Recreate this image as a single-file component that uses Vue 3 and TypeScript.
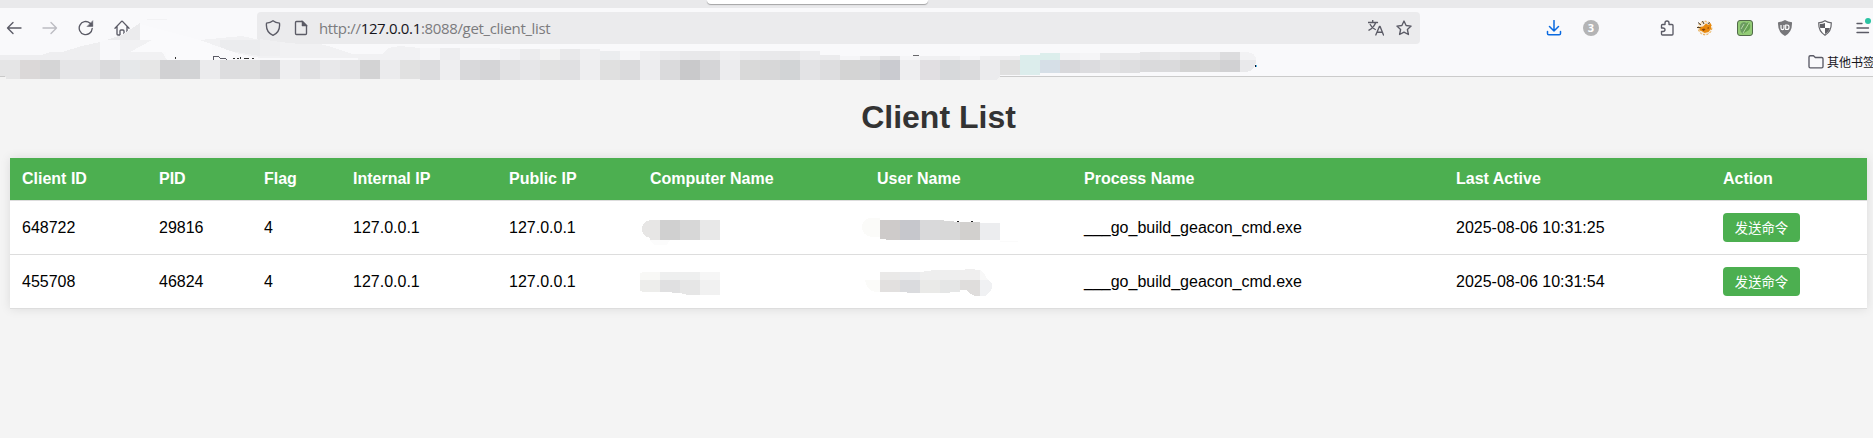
<script setup lang="ts">
interface Client {
  id: string
  pid: string
  flag: string
  internalIp: string
  publicIp: string
  process: string
  lastActive: string
}

interface Tile {
  x: number
  y: number
  w: number
  h: number
  c: string
}

const headers: string[] = [
  'Client ID', 'PID', 'Flag', 'Internal IP', 'Public IP',
  'Computer Name', 'User Name', 'Process Name', 'Last Active', 'Action',
]

const clients: Client[] = [
  { id: '648722', pid: '29816', flag: '4', internalIp: '127.0.0.1', publicIp: '127.0.0.1', process: '___go_build_geacon_cmd.exe', lastActive: '2025-08-06 10:31:25' },
  { id: '455708', pid: '46824', flag: '4', internalIp: '127.0.0.1', publicIp: '127.0.0.1', process: '___go_build_geacon_cmd.exe', lastActive: '2025-08-06 10:31:54' },
]

const strip = (colors: string, x: number, y: number, h: number): Tile[] =>
  colors.split(' ').map((c, i) => ({ x: x + i * 20, y, w: 20, h, c: '#' + c }))

const lowerTiles: Tile[] = [
  ...strip('e5e5e6 dbd8d8 d5d5d6 e5e5e7 e5e5e7 dadadc e6e8ea e6e6e6 d1d1d3 d2d3d5 ebebed dddddf dededf d5d5d7 eeeef0 e0e0e2 e8e8ea e4e4e6 d3d3d4 ebebed e1e1e1', 0, 60, 19),
  ...strip('dcdcde eeeef0 d9d9db d5d5d7 e1e1e3 e6e6e8 e1e1e1 e0e0e2 eeeef0 e0e0e0 dadadc ededef dadadc c9c9cb d5d5d7 ececee d9d9d9 d7d7d8 d2d4d6 e3e3e5 dddddf d4d4d4 d3d4d6 cacbd0 eeeef0 e1dfe2 d7d9db dadadc ebebed', 420, 60, 20),
  ...strip('e0e0e0 dcedec', 1000, 60, 15),
  ...strip('d6dfe7 d8d8db dcdcdf e1e1e3 dedee0', 1040, 60, 13),
  ...strip('dadadc dadadc d3d3d3 d5d5d5 d1d1d3', 1140, 60, 12),
]

const upperTiles: Tile[] = [
  ...strip('f5f5f7 ededef f4f4f6 f4f4f6', 420, 48, 12),
  ...strip('f1f1f3 ebebed f2f2f2 e8e8ea efeff1', 500, 49, 11),
  ...strip('ebedef f5f5f7 eeeef0 ebebed e8e8ea e7e7e9 eeeef0 ebebed e9e9eb e7e7e9 ededef', 600, 51, 9),
  ...strip('ebebed', 820, 55, 5),
  ...strip('f5f5f7 ebebed e2e2e4 f5f5f7 f0f0f2 efeff1 f5f5f7 eeeef0 eeeef0', 840, 56, 4),
  ...strip('dceeec', 1020, 55, 5),
  ...strip('dceeec f3f3f5 f5f5f7 e9e9eb eaeaec', 1040, 53, 7),
  ...strip('e6e6e8 e9e9eb e6e6e8 e8e8ea dcdcde', 1140, 52, 8),
]
</script>

<template>
  <div class="window">
    <div class="tabstrip"><div class="tab"></div></div>

    <header class="chrome">
      <div class="toolbar">
        <nav class="nav">
          <svg class="ico" viewBox="0 0 16 16"><path d="M15 8H1.500M7 2.500 1.500 8 7 13.500" /></svg>
          <svg class="ico dim" viewBox="0 0 16 16"><path d="M1 8h13.500M9 2.500 14.500 8 9 13.500" /></svg>
          <svg class="ico" viewBox="0 0 16 16"><path d="M14.200 8.500A6.500 6.500 0 1 1 11.800 3L14 5.300" /><path class="solid" d="M14.800 1v5.500H9.300Z" /></svg>
          <svg class="ico" viewBox="0 0 16 16"><path d="M1 8.200 7.300 1.600q.7-.6 1.400 0L15 8.200M3 6.500V14q0 1 1 1h2v-4q0-1 1-1h2q1 0 1 1v4h2q1 0 1-1V6.500" /></svg>
        </nav>

        <div class="urlbar">
          <svg class="ico shield" viewBox="0 0 16 16"><path d="M8 .8C10 2.400 12.500 3 14.500 3.200 15 8 13.500 13 8 15.300 2.500 13 1 8 1.500 3.200 3.500 3 6 2.400 8 .8Z" /></svg>
          <svg class="ico page" viewBox="0 0 16 16"><path d="M3.500 1.500h6l4 4v8q0 1-1 1h-9q-1 0-1-1v-11q0-1 1-1Z" /><path class="solid" d="M9 1v5h5Z" /></svg>
          <span class="url">http://<b>127.0.0.1</b>:8088/get_client_list</span>
          <svg class="ico translate" viewBox="0 0 16 16"><path d="M0 2.500h9.500M4.700.3v2M7.700 2.500Q6 7.500 1 10.200M2.200 4.500Q3.800 8 7.300 9.500M7.800 15 11.500 6.300h.5L15.500 15M9 12.200h5.500" /></svg>
          <svg class="ico star" viewBox="0 0 16 16"><path d="m8 1 2.100 4.500 5 .6-3.700 3.400 1 5L8 12.100l-4.400 2.400 1-5L.9 6.100l5-.6Z" /></svg>
        </div>

        <div class="actions">
          <svg class="ico download" viewBox="0 0 16 16"><path d="M8 .5v10.500M3.500 6.500 8 11l4.500-4.500M1.500 11.500v2q0 1.300 1.300 1.300h10.400q1.300 0 1.300-1.300v-2" /></svg>
          <span class="count">3</span>
          <svg class="ico puzzle" viewBox="0 0 16 16"><path d="M6 4.500V3Q6 1 8 1t2 2v1.500h3q1 0 1 1V14q0 1-1 1H3.500q-1 0-1-1v-2.500H4q2 0 2-1.700T4 8H2.500V5.500q0-1 1-1Z" /></svg>
          <svg class="art fox" viewBox="0 0 16 16">
            <circle cx="8" cy="8" r="6.800" fill="#f6ead8" stroke="#e6a23c" stroke-width="1" stroke-dasharray="2 1.500" />
            <path d="M2.500 7 6 6.500l3-3 2.500 1.500L14 3v6l-2.500 3-4 1-3-2-2-.5Z" fill="#e8890f" />
            <path d="M1 2.500 4 5M5.500 1l1.500 3M0 7.500h3.500M11 4l2-1.500" stroke="#4b3b26" stroke-width="1" />
            <path d="m4.500 9.500 2.500-1 1.500 1-2 1.500ZM10 8l2-1-.5 2Z" fill="#864208" />
            <path d="M9 2.500h3l-1.500 1.500Z" fill="#c9cbd0" />
          </svg>
          <svg class="art" viewBox="0 0 16 16">
            <rect x=".5" y=".5" width="15" height="15" rx="2.500" fill="#93cb76" stroke="#526a4a" />
            <path d="M3 9Q2 3 7 2l3 1-4 11-2-2Z" fill="#6b9a62" /><path d="M7 13Q5 7 11 2q4 3 1 8Z" fill="#65a052" /><path d="M6 13 12 3M4 9l3-5" stroke="#b4d5a3" fill="none" />
          </svg>
          <svg class="art" viewBox="0 0 16 16"><path d="M8 0q3 2 7 2.300Q15.500 12 8 16 .5 12 1 2.300 5 2 8 0Z" fill="#77777a" /><path d="M4 5v3q0 1.700 1.500 1.700T7 8V5M8.700 5v4.500h1.200Q12 9.500 12 7.200T9.900 5Z" fill="none" stroke="#fff" stroke-width="1.200" /></svg>
          <svg class="art" viewBox="0 0 16 16"><path d="M8 .8Q10.500 2.500 14.300 2.800 14.500 11.500 8 15.200 1.500 11.500 1.700 2.800 5.500 2.500 8 .8Z" fill="#fff" stroke="#66666b" stroke-width="1.200" /><path d="M8 3v5H3.200Q2.800 6 2.900 4 6 4 8 3ZM8 8h4.800Q11.800 12 8 14Z" fill="#606065" /></svg>
          <div class="menu">
            <svg class="ico" viewBox="0 0 16 16"><path d="M2 3.500h5M2 8h11.500M2 12.500h11.500" /></svg>
            <i class="dot"></i>
          </div>
        </div>
      </div>

      <div class="bookmarks">
        <svg class="ico" viewBox="0 0 16 16"><path d="M1 12.500V3q0-1.300 1.300-1.300h3.200L7.300 3.500h6.400Q15 3.500 15 4.800v7.700q0 1.300-1.300 1.300H2.300Q1 13.800 1 12.500Z" /></svg>
        <span>其他书签</span>
      </div>

      <svg class="mosaic" viewBox="0 0 1260 80" shape-rendering="crispEdges">
        <path d="M147 19h20v1h-20Z" fill="#f2f2f4" />
        <path d="M140 24v16h13l-23 12h36v8h46V40h-12Z" fill="#fafafc" />
        <path d="M0 55h42l8-3h12l20-6 18-4v18H0Z" fill="#eeeef0" />
        <path d="M100 42l6-2h14v20h-20Z" fill="#f8f8fa" />
        <path d="m106 40 16-5 18-12v17Z" fill="#ebebed" />
        <path d="M120 40h32l-22 12h32l5 8h-47Z" fill="#f1f1f3" />
        <path d="m200 40 42-4 18 4 40 4h20l12 3 20 7h30l6-6 12-2 20 2v12h-62v-2h-98l-24-5Z" fill="#f1f1f3" />
        <path d="M220 40h40v16l-30-5-10-4Z" fill="#ebecee" />
        <path d="M260 39v17h20V42Z" fill="#efeff1" />
        <path d="M213 60v-3q0-1 1-1h4l2 2h5l2 2" fill="none" stroke="#5b5b66" stroke-width="1" />
        <path d="M175 57v2M233 58h2M237 58h2M240 57v2M244 58h5M252 58h2" stroke="#333" stroke-width="1" />
        <rect v-for="(t, i) in upperTiles" :key="'u' + i" :x="t.x" :y="t.y" :width="t.w" :height="t.h" :fill="t.c" />
        <rect v-for="(t, i) in lowerTiles" :key="'l' + i" :x="t.x" :y="t.y" :width="t.w" :height="t.h" :fill="t.c" />
        <path d="M1240 52h7q9 1 9 8h-16Z" fill="#f2f2f4" />
        <path d="M1240 60h16q0 10-9 12h-7Z" fill="#e9e9eb" />
        <path d="M0 76h5l2 4H0ZM1000 76v4h-3Z" fill="#f3f3f3" />
        <path d="M0 76h5v1H0Z" fill="#c9c9c9" />
        <path d="M913 55h6v1h-6Z" fill="#68686b" />
        <path d="M1255 65h1v2h-1Z" fill="#112" />
        <path d="M1256 65h1v2h-1Z" fill="#4cbcf0" />
      </svg>
    </header>

    <main>
      <h1>Client List</h1>
      <table>
        <colgroup><col v-for="(h, i) in headers" :key="h" :class="'c' + i" /></colgroup>
        <thead>
          <tr><th v-for="h in headers" :key="h">{{ h }}</th></tr>
        </thead>
        <tbody>
          <tr v-for="(c, i) in clients" :key="c.id">
            <td>{{ c.id }}</td>
            <td>{{ c.pid }}</td>
            <td>{{ c.flag }}</td>
            <td>{{ c.internalIp }}</td>
            <td>{{ c.publicIp }}</td>
            <td>
              <svg v-if="i === 0" class="veil" width="100" height="30" viewBox="640 215 100 30" shape-rendering="crispEdges">
                <path d="M650 240h20l-4 6h-11Z" fill="#fcfcfc" />
                <path d="M660 220h-10q-8 2-8 9 0 7 8 9v2h10Z" fill="#e7e6e5" />
                <path d="M660 220h20v20h-20Z" fill="#d0d0d0" /><path d="M680 220h20v20h-20Z" fill="#d7d7d7" /><path d="M700 220h20v20h-20Z" fill="#e8e8e8" />
              </svg>
              <svg v-else class="veil" width="100" height="30" viewBox="640 269 100 30" shape-rendering="crispEdges">
                <path d="M640 273l3-1h17v8h-20Z" fill="#f8f8f6" /><path d="M640 280h20v12h-17l-3-1Z" fill="#ededeb" />
                <path d="M660 272h40v8h-40Z" fill="#eeefef" /><path d="M700 272h20v8h-20Z" fill="#f6f6f6" />
                <path d="M660 280h20v13l-17-1h-3Z" fill="#e0e0e1" /><path d="M680 280h20v15h-12l-8-2Z" fill="#e6e6e6" /><path d="M700 280h20v15h-20Z" fill="#f1f1f1" />
              </svg>
            </td>
            <td>
              <svg v-if="i === 0" class="veil user" width="160" height="30" viewBox="860 215 160 30" shape-rendering="crispEdges">
                <path d="M880 218h-11q-7 3-7 9 0 8 9 10h9Z" fill="#fbfbf9" />
                <path d="M880 220h20v20h-14v-1h-6Z" fill="#cecbca" /><path d="M900 220h20v20h-20Z" fill="#c6c7cc" /><path d="M920 220h20v20h-20Z" fill="#d9d9da" />
                <path d="M940 220l8 1 12 1v18h-20Z" fill="#d8d8d8" /><path d="M960 222h20v18h-20Z" fill="#d2d0ce" /><path d="M980 223h20v17h-20Z" fill="#ecedef" />
                <path d="M957 221h2v1h-2ZM971 221h2v1h-2Z" fill="#222" /><path d="M1000 241h18v1h-18Z" fill="#fbfbfb" />
              </svg>
              <svg v-else class="veil user" width="160" height="30" viewBox="860 269 160 30" shape-rendering="crispEdges">
                <path d="M880 280h-15q1 10 10 12h5Z" fill="#fbfbf9" />
                <path d="M880 272h20v8h-20Z" fill="#eae9e8" /><path d="M900 272h20v8h-20Z" fill="#e9eaec" /><path d="M920 272l15-2h25v10h-40Z" fill="#eeeeee" />
                <path d="M960 270l10-1 10 1v10h-20Z" fill="#efeeee" /><path d="M980 270l5 5 3 5h-8Z" fill="#f8f8f8" />
                <path d="M880 280h20v12h-20Z" fill="#e2e0df" /><path d="M900 280h20v13h-12l-2-1h-6Z" fill="#dadbde" /><path d="M920 280h20v13h-20Z" fill="#eaeae8" /><path d="M940 280h20v12l-20 1Z" fill="#e5e6e6" />
                <path d="M960 280h20v16h-5q-6-2-8-6h-7Z" fill="#dfdddc" /><path d="M980 280h9q5 4 2 10l-5 6h-6Z" fill="#f0f1f3" />
              </svg>
            </td>
            <td>{{ c.process }}</td>
            <td>{{ c.lastActive }}</td>
            <td><button type="button">发送命令</button></td>
          </tr>
        </tbody>
      </table>
    </main>
  </div>
</template>

<style>
body {
  margin: 0;
  background: #f4f4f4;
}
</style>

<style scoped>
.window {
  width: 1873px;
  height: 438px;
  overflow: hidden;
  background: #f4f4f4;
  font-family: "Liberation Sans", Arial, "Noto Sans CJK SC", sans-serif;
  color: #000;
}
.tabstrip {
  height: 8px;
  background: #e9e9eb;
}
.tab {
  width: 221px;
  height: 4px;
  margin-left: 707px;
  background: #fff;
  border-radius: 0 0 4px 4px;
  box-shadow: 0 1px 1px rgba(0, 0, 0, 0.3);
}
.chrome {
  position: relative;
  box-sizing: border-box;
  height: 69px;
  background: #f9f9fb;
  border-bottom: 1px solid #cbcbcb;
}
.toolbar {
  display: flex;
  align-items: center;
  height: 40px;
}
.nav {
  display: flex;
  flex: none;
  gap: 20px;
  width: 251px;
  padding-left: 6px;
}
.ico {
  display: block;
  flex: none;
  width: 16px;
  height: 16px;
  fill: none;
  stroke: #5b5b66;
  stroke-width: 1.35;
  stroke-linecap: round;
  stroke-linejoin: round;
}
.ico .solid {
  fill: #5b5b66;
  stroke-width: 0.5;
}
.dim {
  stroke: #bcbcc2;
}
.urlbar {
  display: flex;
  flex: none;
  align-items: center;
  box-sizing: border-box;
  width: 1163px;
  height: 32px;
  padding: 0 8px;
  background: #ebebed;
  border-radius: 4px;
}
.page {
  margin-left: 12px;
}
.url {
  flex: 1;
  margin-left: 10px;
  font: 15px/30px "Open Sans", "Noto Sans", sans-serif;
  letter-spacing: -0.34px;
  color: #7b7b7e;
  white-space: nowrap;
}
.url b {
  font-weight: 400;
  color: #15141a;
}
.star {
  margin-left: 12px;
}
.actions {
  display: flex;
  flex: none;
  align-items: center;
  padding-left: 126px;
}
.download {
  stroke: #0a6ae0;
  stroke-width: 1.5;
}
.count {
  width: 16px;
  height: 16px;
  margin: 0 60px 0 21px;
  border-radius: 50%;
  background: #b4b4b5;
  color: #fff;
  font: bold 11px/16px "Open Sans", sans-serif;
  text-align: center;
}
.art {
  display: block;
  flex: none;
  width: 16px;
  height: 16px;
  margin-left: 24px;
}
.fox {
  margin-left: 22px;
}
.menu {
  position: relative;
  margin-left: 22px;
}
.dot {
  position: absolute;
  left: 10px;
  top: -2px;
  width: 6px;
  height: 6px;
  border-radius: 50%;
  background: #2ac3a2;
}
.bookmarks {
  display: flex;
  align-items: center;
  gap: 3px;
  height: 28px;
  padding-left: 1808px;
  font: 12px/18px "Noto Sans CJK SC", sans-serif;
  color: #15141a;
  white-space: nowrap;
}
.mosaic {
  position: absolute;
  left: 0;
  top: -8px;
  width: 1260px;
  height: 80px;
}
main {
  padding: 22px 6px 0 10px;
}
h1 {
  margin: 0 0 22px;
  font-size: 32px;
  line-height: 37px;
  text-align: center;
  color: #333;
}
table {
  width: 1857px;
  table-layout: fixed;
  border-collapse: separate;
  border-spacing: 0;
  background: #fff;
  box-shadow: 0 0 10px rgba(0, 0, 0, 0.1);
}
.c0 { width: 137px; }
.c1 { width: 105px; }
.c2 { width: 89px; }
.c3 { width: 156px; }
.c4 { width: 141px; }
.c5 { width: 227px; }
.c6 { width: 207px; }
.c7 { width: 372px; }
.c8 { width: 267px; }
.c9 { width: 156px; }
th,
td {
  box-sizing: border-box;
  padding: 0 12px;
  border-bottom: 1px solid #ddd;
  font-size: 16px;
  line-height: 18px;
  text-align: left;
  vertical-align: middle;
  white-space: nowrap;
}
th {
  height: 43px;
  padding-bottom: 1px;
  background: #4caf50;
  color: #fff;
}
td {
  height: 54px;
}
.veil {
  display: block;
  margin: 4px 0 0 -10px;
}
.veil.user {
  margin-left: -17px;
}
button {
  display: block;
  width: 77px;
  height: 29px;
  padding: 0;
  border: 0;
  border-radius: 4px;
  background: #4caf50;
  color: #fff;
  font: 13.333px/29px "Noto Sans CJK SC", sans-serif;
}
</style>
